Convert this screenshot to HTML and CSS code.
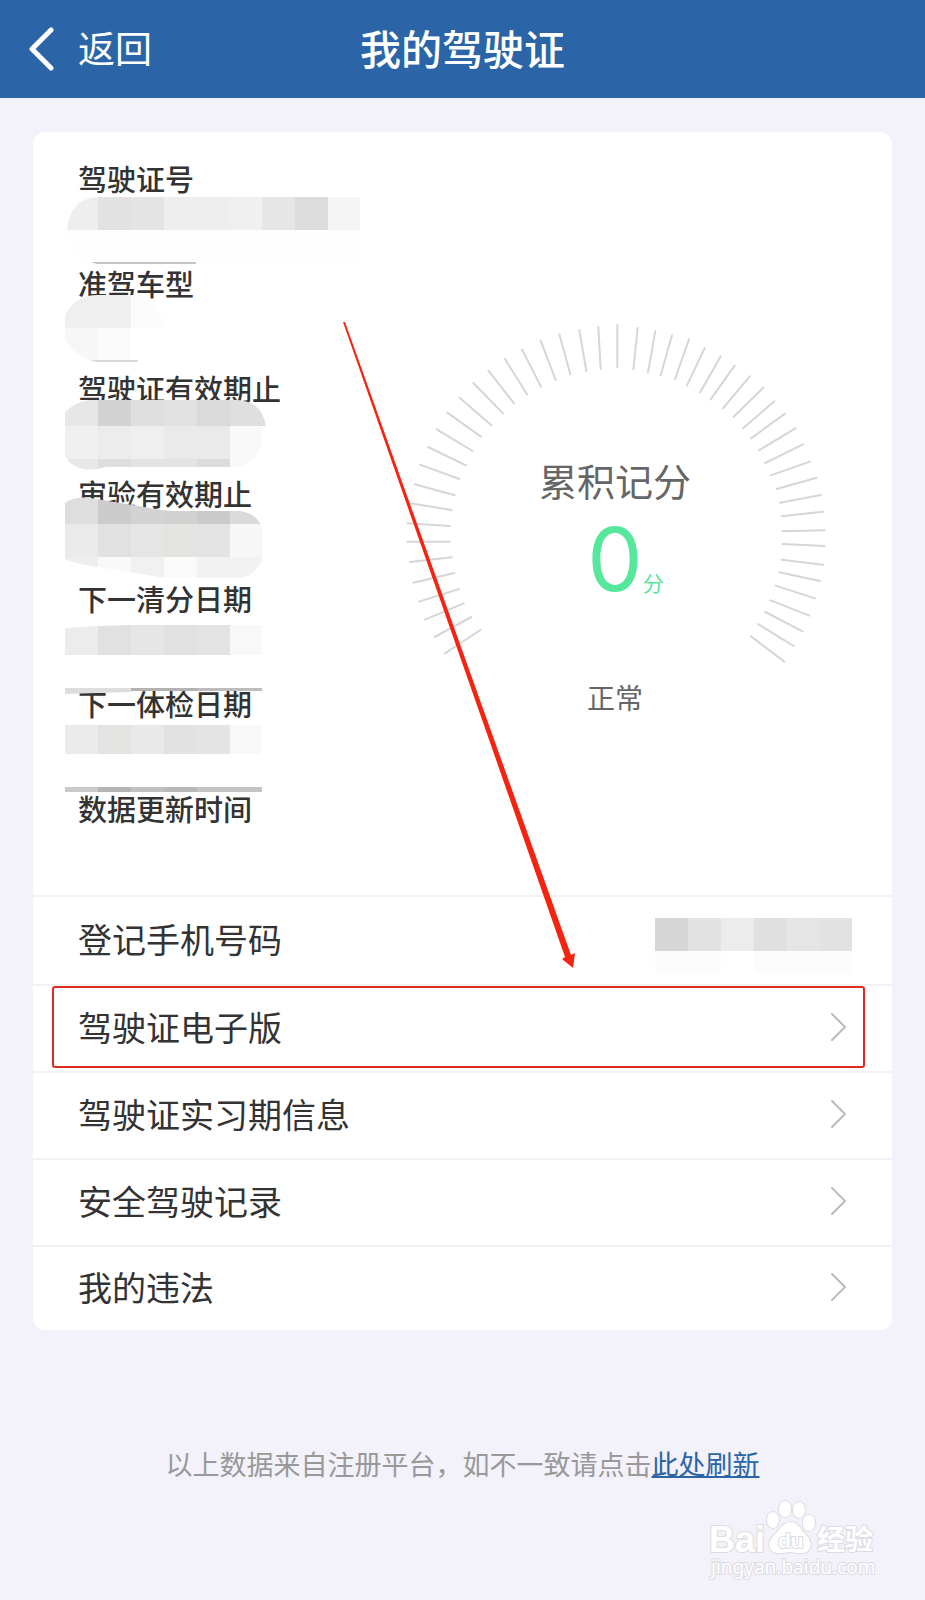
FILE: index.html
```html
<!DOCTYPE html>
<html lang="zh-CN">
<head>
    <meta charset="UTF-8">
    <meta name="viewport" content="width=device-width, initial-scale=1.0">
    <title>我的驾驶证</title>
    <link rel="stylesheet" href="styles.css">
</head>
<body>
    <header class="topbar">
        <a class="back" href="#">
            <svg class="back-icon" viewBox="0 0 28 44" aria-hidden="true">
                <path d="M23 3 L4 22 L23 41"/>
            </svg>
            返回
        </a>
        <h1>我的驾驶证</h1>
    </header>

    <main class="card">
        <section class="summary">
            <div class="fields">
                <dl>
                    <dt>驾驶证号</dt><dd></dd>
                    <dt>准驾车型</dt><dd></dd>
                    <dt>驾驶证有效期止</dt><dd></dd>
                    <dt>审验有效期止</dt><dd></dd>
                    <dt>下一清分日期</dt><dd></dd>
                    <dt>下一体检日期</dt><dd></dd>
                    <dt>数据更新时间</dt><dd></dd>
                </dl>
                <!-- mosaic over the personal data -->
                <svg class="mosaic" viewBox="60 190 310 610" aria-hidden="true">
                    <defs>
                        <clipPath id="m1"><path d="M67 230 Q70 197 100 197 H361 V264 H97 Q67 256 67 230Z"/></clipPath>
                        <clipPath id="m2"><path d="M65 316 Q74 295 98 295 H140 Q160 302 164 328 L150 358 Q140 362 131 362 H96 Q74 356 65 340Z"/></clipPath>
                        <clipPath id="m3"><path d="M65 412 Q78 400 92 400 H238 Q262 402 266 426 H262 V442 Q258 464 236 467 H105 Q88 473 75 466 Q68 462 65 456Z"/></clipPath>
                        <clipPath id="m4"><path d="M65 503 Q75 496 90 498 L150 508 Q165 511 175 511 H240 Q256 513 262 527 V561 Q254 576 240 578 H165 L98 567 Q72 563 65 559Z"/></clipPath>
                        <clipPath id="m5"><path d="M65 628 L98 626 L130 625 H262 V656 H65Z"/></clipPath>
                    </defs>
                    <g clip-path="url(#m1)">
                        <rect x="65" y="197" width="33" height="33" fill="#eeeeee"/>
                        <rect x="98" y="197" width="33" height="33" fill="#e2e2e2"/>
                        <rect x="131" y="197" width="33" height="33" fill="#e4e4e4"/>
                        <rect x="164" y="197" width="66" height="33" fill="#eeeeee"/>
                        <rect x="230" y="197" width="32" height="33" fill="#f0f0f0"/>
                        <rect x="262" y="197" width="33" height="33" fill="#e6e6e6"/>
                        <rect x="295" y="197" width="33" height="33" fill="#dcdcdc"/>
                        <rect x="328" y="197" width="32" height="33" fill="#f5f5f5"/>
                        <rect x="65" y="230" width="295" height="32" fill="#fefefe"/>
                        <rect x="88" y="262" width="108" height="2" fill="#c4c4c4"/>
                    </g>
                    <g clip-path="url(#m2)">
                        <rect x="65" y="295" width="33" height="33" fill="#efefef"/>
                        <rect x="98" y="295" width="33" height="33" fill="#f0f0f0"/>
                        <rect x="131" y="295" width="33" height="33" fill="#fcfcfc"/>
                        <rect x="65" y="328" width="33" height="34" fill="#f7f7f7"/>
                        <rect x="98" y="328" width="33" height="34" fill="#fbfbfb"/>
                        <rect x="90" y="360" width="48" height="2" fill="#d8d8d8"/>
                    </g>
                    <g clip-path="url(#m3)">
                        <rect x="65" y="398" width="33" height="28" fill="#e7e7e7"/>
                        <rect x="98" y="398" width="33" height="28" fill="#d3d3d3"/>
                        <rect x="131" y="398" width="33" height="28" fill="#dfdfdf"/>
                        <rect x="164" y="398" width="33" height="28" fill="#e1e1e1"/>
                        <rect x="197" y="398" width="33" height="28" fill="#dadada"/>
                        <rect x="230" y="398" width="36" height="28" fill="#dfdfdf"/>
                        <rect x="65" y="426" width="33" height="33" fill="#f0f0f0"/>
                        <rect x="98" y="426" width="33" height="33" fill="#ececec"/>
                        <rect x="131" y="426" width="33" height="33" fill="#efefef"/>
                        <rect x="164" y="426" width="66" height="33" fill="#eaeaea"/>
                        <rect x="230" y="426" width="32" height="41" fill="#f9f9f9"/>
                        <rect x="65" y="459" width="33" height="12" fill="#e8e8e8"/>
                        <rect x="98" y="459" width="33" height="12" fill="#dedede"/>
                        <rect x="131" y="459" width="66" height="12" fill="#e3e3e3"/>
                        <rect x="197" y="459" width="33" height="12" fill="#dcdcdc"/>
                    </g>
                    <g clip-path="url(#m4)">
                        <rect x="65" y="495" width="33" height="29" fill="#dedede"/>
                        <rect x="98" y="495" width="33" height="29" fill="#cccccc"/>
                        <rect x="131" y="495" width="33" height="29" fill="#d3d3d3"/>
                        <rect x="164" y="495" width="33" height="29" fill="#d1d1d1"/>
                        <rect x="197" y="495" width="33" height="29" fill="#cacaca"/>
                        <rect x="230" y="495" width="32" height="29" fill="#dadada"/>
                        <rect x="65" y="524" width="33" height="33" fill="#eaeaea"/>
                        <rect x="98" y="524" width="33" height="33" fill="#e1e1e1"/>
                        <rect x="131" y="524" width="33" height="33" fill="#e5e5e5"/>
                        <rect x="164" y="524" width="33" height="33" fill="#e3e3e0"/>
                        <rect x="197" y="524" width="33" height="33" fill="#e3e3e3"/>
                        <rect x="230" y="524" width="32" height="33" fill="#f7f7f7"/>
                        <rect x="65" y="557" width="33" height="21" fill="#eeeeee"/>
                        <rect x="98" y="557" width="33" height="21" fill="#f9f9f9"/>
                        <rect x="131" y="557" width="33" height="21" fill="#f1f1f1"/>
                        <rect x="164" y="557" width="33" height="21" fill="#fafafa"/>
                        <rect x="197" y="557" width="65" height="21" fill="#f2f2f2"/>
                    </g>
                    <g clip-path="url(#m5)">
                        <rect x="65" y="625" width="33" height="30" fill="#ececec"/>
                        <rect x="98" y="625" width="33" height="30" fill="#e1e1e1"/>
                        <rect x="131" y="625" width="33" height="30" fill="#e6e6e6"/>
                        <rect x="164" y="625" width="33" height="30" fill="#e1e1e1"/>
                        <rect x="197" y="625" width="33" height="30" fill="#e3e3e3"/>
                        <rect x="230" y="625" width="32" height="30" fill="#f8f8f8"/>
                    </g>
                    <path d="M65 688 H131 V692 L65 694Z" fill="#dddddd"/>
                    <rect x="131" y="688" width="66" height="3" fill="#b2b2b2"/>
                    <rect x="197" y="688" width="65" height="3" fill="#bcbcbc"/>
                    <rect x="65" y="725" width="33" height="29" fill="#ebebeb"/>
                    <rect x="98" y="725" width="33" height="29" fill="#e3e3e1"/>
                    <rect x="131" y="725" width="33" height="29" fill="#e9e9e9"/>
                    <rect x="164" y="725" width="33" height="29" fill="#e2e2e2"/>
                    <rect x="197" y="725" width="33" height="29" fill="#e4e4e4"/>
                    <rect x="230" y="725" width="32" height="29" fill="#f8f8f8"/>
                    <rect x="65" y="787" width="33" height="5" fill="#cacaca"/>
                    <rect x="98" y="787" width="33" height="5" fill="#b5b5b5"/>
                    <rect x="131" y="787" width="33" height="5" fill="#c0c0c0"/>
                    <rect x="164" y="787" width="33" height="5" fill="#b8b8b8"/>
                    <rect x="197" y="787" width="65" height="5" fill="#c3c3c3"/>
                </svg>
            </div>

            <div class="gauge">
                <svg class="ticks" viewBox="0 0 1350 1320" aria-hidden="true">
                    <path d="M165 1060L271 990M134 1011L244 951M105 959L221 910M87 905L207 867M70 848L193 819
                        M60 786L185 772M52 725L179 725M53 670L179 678M61 610L185 630M74 553L194 586
                        M90 494L208 537M114 441L228 496M140 388L248 453M172 338L273 410M209 293L304 376
                        M250 249L339 340M295 212L372 310M345 177L411 283M396 149L453 260M452 122L497 240
                        M508 103L541 223M568 90L589 213M625 81L632 206M682 75L682 201M743 84L730 208
                        M796 93L774 217M846 106L812 226M897 118L855 237M944 144L891 256M992 169L931 277
                        M1034 197L962 298M1079 229L999 325M1120 263L1031 350M1153 304L1059 385M1185 341L1083 415
                        M1216 385L1107 451M1239 433L1126 489M1260 485L1142 526M1280 533L1160 567M1293 585L1170 608
                        M1299 635L1175 649M1304 691L1177 694M1303 738L1178 732M1299 794L1175 779M1290 843L1168 817
                        M1275 895L1157 857M1258 947L1142 901M1238 994L1126 936M1211 1038L1104 972M1183 1085L1083 1009"/>
                </svg>
                <div class="score">
                    <div class="score-label">累积记分</div>
                    <div class="score-value">
                        <span class="num">0</span>
                        <span class="unit">分</span>
                    </div>
                    <div class="score-state">正常</div>
                </div>
            </div>
        </section>

        <ul class="menu">
            <li>
                <div class="row">
                    登记手机号码
                    <svg class="phone" viewBox="0 0 197 56" aria-hidden="true">
                        <rect width="33" height="33" fill="#d6d6d6"/>
                        <rect x="33" width="33" height="33" fill="#e2e2e2"/>
                        <rect x="66" width="33" height="33" fill="#ececec"/>
                        <rect x="99" width="33" height="33" fill="#e0e0e0"/>
                        <rect x="132" width="33" height="33" fill="#e5e5e5"/>
                        <rect x="165" width="32" height="33" fill="#e2e2e2"/>
                        <rect y="33" width="66" height="23" fill="#fcfcfc"/>
                        <rect x="99" y="33" width="98" height="23" fill="#fcfcfc"/>
                    </svg>
                </div>
            </li>
            <li>
                <a class="row marked" href="#">驾驶证电子版
                    <svg class="chevron" viewBox="0 0 24 30" aria-hidden="true"><path d="M4 2 L17 15 L4 28"/></svg>
                </a>
            </li>
            <li>
                <a class="row" href="#">驾驶证实习期信息
                    <svg class="chevron" viewBox="0 0 24 30" aria-hidden="true"><path d="M4 2 L17 15 L4 28"/></svg>
                </a>
            </li>
            <li>
                <a class="row" href="#">安全驾驶记录
                    <svg class="chevron" viewBox="0 0 24 30" aria-hidden="true"><path d="M4 2 L17 15 L4 28"/></svg>
                </a>
            </li>
            <li>
                <a class="row" href="#">我的违法
                    <svg class="chevron" viewBox="0 0 24 30" aria-hidden="true"><path d="M4 2 L17 15 L4 28"/></svg>
                </a>
            </li>
        </ul>

        <svg class="arrow" viewBox="340 315 240 660" aria-hidden="true">
            <path d="M343 322 L345 322 L571 955 L575 953 L573 968 L562 959 L565 957Z"/>
        </svg>
    </main>

    <p class="note">以上数据来自注册平台，如不一致请点击<a href="#">此处刷新</a></p>

    <svg class="watermark" viewBox="0 0 180 90" role="img" aria-label="Baidu 经验">
        <text class="wm-logo" x="4" y="56">Bai</text>
        <g class="wm-paw">
            <ellipse cx="68" cy="24" rx="6" ry="8"/>
            <ellipse cx="80" cy="13" rx="6" ry="8"/>
            <ellipse cx="94" cy="14" rx="6" ry="8"/>
            <ellipse cx="104" cy="27" rx="6" ry="8"/>
            <path d="M86 26 C93 26 96 34 101 39 C108 45 107 56 98 57 C93 58 89 56 85 56 C80 56 77 58 72 57 C63 56 62 45 69 39 C75 34 78 26 86 26Z"/>
        </g>
        <text class="wm-du" x="73" y="52">du</text>
        <text class="wm-cn" x="112" y="54">经验</text>
        <text class="wm-url" x="6" y="78">jingyan.baidu.com</text>
    </svg>
</body>
</html>
```

FILE: styles.css
```css
* {
    box-sizing: border-box;
}

body {
    position: relative;
    margin: 0;
    min-height: 100vh;
    background: #f3f1f9;
    color: #333;
    font-family: "Noto Sans CJK SC", sans-serif;
}

a {
    color: inherit;
    text-decoration: none;
}

.topbar {
    display: grid;
    grid-template-columns: 1fr auto 1fr;
    align-items: center;
    height: 98px;
    padding: 0 28px 4px;
    background: #2b65a8;
    color: #fff;
}

.back {
    display: flex;
    align-items: center;
    gap: 22px;
    font-size: 37px;
}

.back-icon {
    width: 28px;
    height: 44px;
    margin-top: 4px;
    fill: none;
    stroke: #fff;
    stroke-width: 5;
    stroke-linecap: round;
    stroke-linejoin: round;
}

.topbar h1 {
    margin: 0;
    font-size: 41px;
    font-weight: 500;
}

.card {
    position: relative;
    margin: 34px 33px 0;
    background: #fff;
    border-radius: 12px;
}

.summary {
    display: grid;
    grid-template-columns: 1fr 450px;
    padding: 26px 52px 2px 45px;
}

.fields {
    position: relative;
}

.fields dl {
    margin: 0;
}

.fields dt {
    height: 40px;
    line-height: 40px;
    font-size: 29px;
    font-weight: 500;
    white-space: nowrap;
}

.fields dd {
    height: 65px;
    margin: 0;
}

.mosaic {
    position: absolute;
    top: 32px;
    left: -18px;
    width: 310px;
    height: 610px;
}

.gauge {
    display: grid;
    align-self: start;
    margin-top: 142px;
}

.ticks,
.score {
    grid-area: 1 / 1;
}

.ticks {
    width: 450px;
    height: 440px;
    fill: none;
    stroke: #d6d6d6;
    stroke-width: 6;
    stroke-linecap: round;
}

.score {
    padding-top: 155px;
    text-align: center;
    color: #666;
}

.score-label {
    line-height: 50px;
    font-size: 38px;
}

.score-value {
    display: grid;
    grid-template-columns: 1fr auto 1fr;
    align-items: baseline;
    margin: 10px 0 74px;
    line-height: 88px;
    color: #57e79c;
}

.num {
    grid-column: 2;
    font-family: Inter, "Noto Sans CJK SC", sans-serif;
    font-size: 88px;
}

.unit {
    font-size: 21px;
    line-height: 20px;
    text-align: left;
}

.score-state {
    line-height: 40px;
    font-size: 28px;
}

.menu {
    margin: 0;
    padding: 0;
    list-style: none;
}

.menu li {
    height: 87px;
    border-top: 2px solid #f2f2f2;
}

.menu li:first-child {
    height: 89px;
}

.menu li:last-child {
    height: 85px;
}

.row {
    position: relative;
    display: flex;
    align-items: center;
    justify-content: space-between;
    height: 100%;
    padding: 0 40px 4px 45px;
    font-size: 34px;
}

.phone {
    width: 197px;
    height: 56px;
    margin-top: 14px;
}

.chevron {
    width: 24px;
    height: 30px;
    fill: none;
    stroke: #bbb;
    stroke-width: 2;
    stroke-linecap: round;
}

.marked::after {
    content: "";
    position: absolute;
    inset: 0 27px 3px 19px;
    border: 2px solid #e02b20;
    border-radius: 3px;
}

.arrow {
    position: absolute;
    top: 183px;
    left: 307px;
    width: 240px;
    height: 660px;
    fill: #f5230f;
    pointer-events: none;
}

.note {
    margin: 114px 0 0;
    line-height: 40px;
    font-size: 27px;
    text-align: center;
    color: #999;
}

.note a {
    color: #2b65a8;
    text-decoration: underline;
    text-decoration-thickness: 2px;
}

.watermark {
    position: absolute;
    right: 40px;
    bottom: 14px;
    width: 180px;
    height: 90px;
    fill: #fff;
    stroke: #dddbe3;
    stroke-width: 2;
    paint-order: stroke;
}

.wm-logo {
    font: bold 36px "Liberation Sans", sans-serif;
}

.wm-du {
    font: bold 21px "Liberation Sans", sans-serif;
}

.wm-cn {
    font: bold 28px "Noto Sans CJK SC", sans-serif;
}

.wm-url {
    font: 19px "Noto Sans", sans-serif;
}
```
